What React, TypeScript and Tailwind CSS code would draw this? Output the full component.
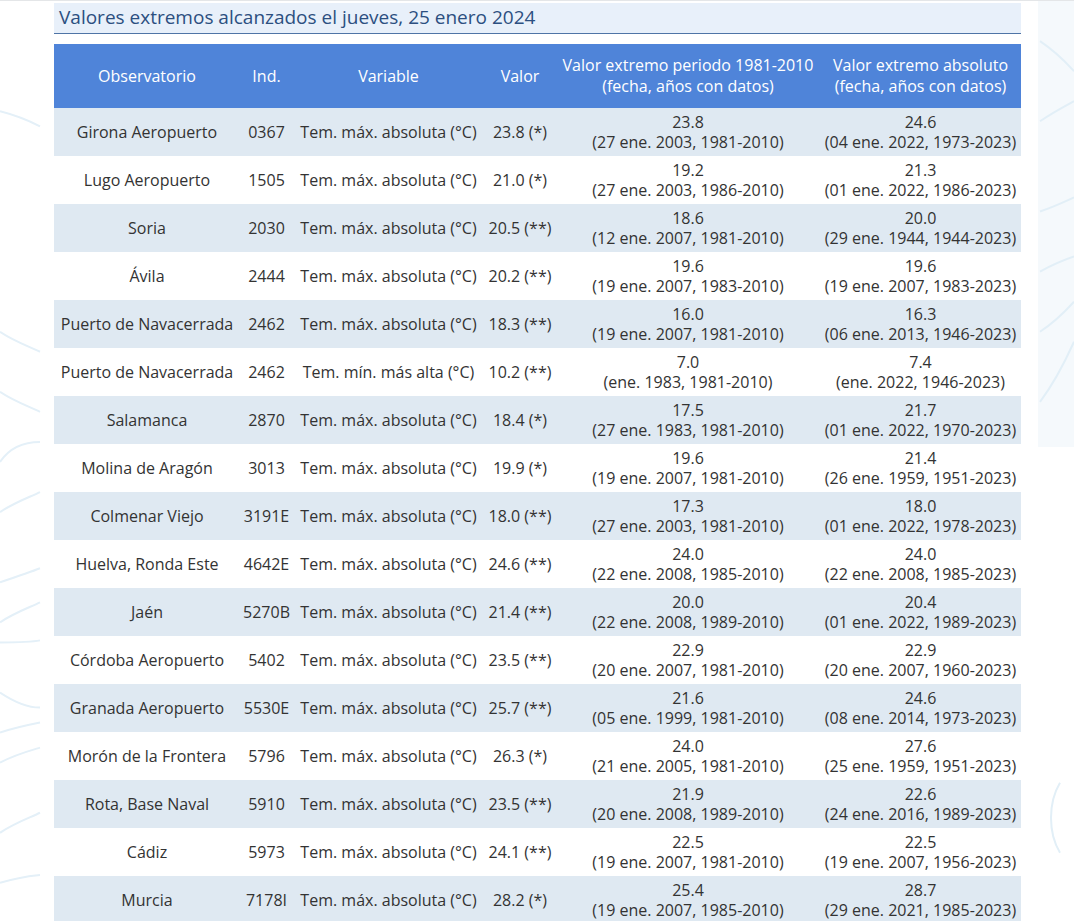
import React from "react";

interface Row {
  obs: string;
  ind: string;
  variable: string;
  valor: string;
  periodo: [string, string];
  absoluto: [string, string];
}

const MAX = "Tem. máx. absoluta (°C)";

const rows: Row[] = [
  { obs: "Girona Aeropuerto", ind: "0367", variable: MAX, valor: "23.8 (*)", periodo: ["23.8", "(27 ene. 2003, 1981-2010)"], absoluto: ["24.6", "(04 ene. 2022, 1973-2023)"] },
  { obs: "Lugo Aeropuerto", ind: "1505", variable: MAX, valor: "21.0 (*)", periodo: ["19.2", "(27 ene. 2003, 1986-2010)"], absoluto: ["21.3", "(01 ene. 2022, 1986-2023)"] },
  { obs: "Soria", ind: "2030", variable: MAX, valor: "20.5 (**)", periodo: ["18.6", "(12 ene. 2007, 1981-2010)"], absoluto: ["20.0", "(29 ene. 1944, 1944-2023)"] },
  { obs: "Ávila", ind: "2444", variable: MAX, valor: "20.2 (**)", periodo: ["19.6", "(19 ene. 2007, 1983-2010)"], absoluto: ["19.6", "(19 ene. 2007, 1983-2023)"] },
  { obs: "Puerto de Navacerrada", ind: "2462", variable: MAX, valor: "18.3 (**)", periodo: ["16.0", "(19 ene. 2007, 1981-2010)"], absoluto: ["16.3", "(06 ene. 2013, 1946-2023)"] },
  { obs: "Puerto de Navacerrada", ind: "2462", variable: "Tem. mín. más alta (°C)", valor: "10.2 (**)", periodo: ["7.0", "(ene. 1983, 1981-2010)"], absoluto: ["7.4", "(ene. 2022, 1946-2023)"] },
  { obs: "Salamanca", ind: "2870", variable: MAX, valor: "18.4 (*)", periodo: ["17.5", "(27 ene. 1983, 1981-2010)"], absoluto: ["21.7", "(01 ene. 2022, 1970-2023)"] },
  { obs: "Molina de Aragón", ind: "3013", variable: MAX, valor: "19.9 (*)", periodo: ["19.6", "(19 ene. 2007, 1981-2010)"], absoluto: ["21.4", "(26 ene. 1959, 1951-2023)"] },
  { obs: "Colmenar Viejo", ind: "3191E", variable: MAX, valor: "18.0 (**)", periodo: ["17.3", "(27 ene. 2003, 1981-2010)"], absoluto: ["18.0", "(01 ene. 2022, 1978-2023)"] },
  { obs: "Huelva, Ronda Este", ind: "4642E", variable: MAX, valor: "24.6 (**)", periodo: ["24.0", "(22 ene. 2008, 1985-2010)"], absoluto: ["24.0", "(22 ene. 2008, 1985-2023)"] },
  { obs: "Jaén", ind: "5270B", variable: MAX, valor: "21.4 (**)", periodo: ["20.0", "(22 ene. 2008, 1989-2010)"], absoluto: ["20.4", "(01 ene. 2022, 1989-2023)"] },
  { obs: "Córdoba Aeropuerto", ind: "5402", variable: MAX, valor: "23.5 (**)", periodo: ["22.9", "(20 ene. 2007, 1981-2010)"], absoluto: ["22.9", "(20 ene. 2007, 1960-2023)"] },
  { obs: "Granada Aeropuerto", ind: "5530E", variable: MAX, valor: "25.7 (**)", periodo: ["21.6", "(05 ene. 1999, 1981-2010)"], absoluto: ["24.6", "(08 ene. 2014, 1973-2023)"] },
  { obs: "Morón de la Frontera", ind: "5796", variable: MAX, valor: "26.3 (*)", periodo: ["24.0", "(21 ene. 2005, 1981-2010)"], absoluto: ["27.6", "(25 ene. 1959, 1951-2023)"] },
  { obs: "Rota, Base Naval", ind: "5910", variable: MAX, valor: "23.5 (**)", periodo: ["21.9", "(20 ene. 2008, 1989-2010)"], absoluto: ["22.6", "(24 ene. 2016, 1989-2023)"] },
  { obs: "Cádiz", ind: "5973", variable: MAX, valor: "24.1 (**)", periodo: ["22.5", "(19 ene. 2007, 1981-2010)"], absoluto: ["22.5", "(19 ene. 2007, 1956-2023)"] },
  { obs: "Murcia", ind: "7178I", variable: MAX, valor: "28.2 (*)", periodo: ["25.4", "(19 ene. 2007, 1985-2010)"], absoluto: ["28.7", "(29 ene. 2021, 1985-2023)"] },
];

// faint background swooshes, purely decorative
const Backdrop = () => (
  <svg className="absolute inset-0 w-full h-full pointer-events-none" viewBox="0 0 1074 921" preserveAspectRatio="none">
    <g fill="none" stroke="#e4f0f8" strokeWidth="2">
      <path d="M0 110 C 20 115, 30 120, 40 125" />
      <path d="M0 330 C 15 340, 30 345, 40 350" />
      <path d="M0 390 C 15 400, 30 405, 40 410" />
      <path d="M0 460 C 10 445, 25 440, 40 440" />
      <path d="M0 510 C 15 500, 30 495, 40 490" />
      <path d="M0 580 C 15 575, 30 570, 40 566" />
      <path d="M0 620 C 15 610, 30 605, 40 600" />
      <path d="M0 640 C 15 640, 30 640, 40 638" />
      <path d="M0 730 C 15 725, 30 722, 40 720" />
      <path d="M0 760 C 15 752, 30 748, 40 745" />
      <path d="M0 830 C 15 820, 30 815, 40 810" />
      <path d="M0 880 C 15 875, 30 873, 40 872" />
      <path d="M0 690 C 15 700, 30 705, 40 705" />
    </g>
    <rect x="1038" y="0" width="36" height="445" fill="#f5f9fc" />
    <g fill="none" stroke="#e2eff7" strokeWidth="2">
      <path d="M1040 40 C 1055 50, 1065 60, 1074 70" />
      <path d="M1040 120 C 1055 110, 1065 105, 1074 100" />
      <path d="M1040 210 C 1055 205, 1065 200, 1074 196" />
      <path d="M1040 330 C 1055 320, 1065 310, 1074 300" />
      <path d="M1040 400 C 1055 380, 1065 360, 1074 340" />
      <path d="M1040 270 C 1055 262, 1065 258, 1074 255" />
      <path d="M1060 780 C 1048 800, 1048 830, 1060 850" />
    </g>
  </svg>
);

const Stack = ({ lines }: { lines: [string, string] }) => (
  <div className="leading-[20px]">
    <div>{lines[0]}</div>
    <div>{lines[1]}</div>
  </div>
);

export default function App() {
  return (
    <div
      className="relative min-h-[921px] w-[1074px] overflow-hidden bg-white border-t border-[#e4e6e8]"
      style={{ fontFamily: '"Open Sans", "Noto Sans", sans-serif' }}
    >
      <Backdrop />
      <div className="relative ml-[54px] w-[967px] pt-[2px]">
        <h2 className="h-[31px] bg-[#e8f0fa] border-b border-[#4f74a6] pl-[5px] text-[19px] leading-[29px] text-[#2c4f80]">
          Valores extremos alcanzados el jueves, 25 enero 2024
        </h2>

        <table className="mt-[10px] w-[967px] table-fixed border-collapse text-[16px] text-[#333]">
          <colgroup>
            <col className="w-[186px]" />
            <col className="w-[53px]" />
            <col className="w-[191px]" />
            <col className="w-[72px]" />
            <col className="w-[264px]" />
            <col className="w-[201px]" />
          </colgroup>
          <thead>
            <tr className="h-16 bg-[#4f84d9] text-white">
              <th className="font-normal">Observatorio</th>
              <th className="font-normal">Ind.</th>
              <th className="font-normal">Variable</th>
              <th className="font-normal">Valor</th>
              <th className="font-normal leading-[21px]">
                Valor extremo periodo 1981-2010
                <br />
                (fecha, años con datos)
              </th>
              <th className="font-normal leading-[21px]">
                Valor extremo absoluto
                <br />
                (fecha, años con datos)
              </th>
            </tr>
          </thead>
          <tbody>
            {rows.map((r, i) => (
              <tr key={i} className={i % 2 === 0 ? "h-12 bg-[#dfe9f2] text-center" : "h-12 bg-white text-center"}>
                <td className="whitespace-nowrap">{r.obs}</td>
                <td>{r.ind}</td>
                <td className="whitespace-nowrap">{r.variable}</td>
                <td className="whitespace-nowrap">{r.valor}</td>
                <td>
                  <Stack lines={r.periodo} />
                </td>
                <td>
                  <Stack lines={r.absoluto} />
                </td>
              </tr>
            ))}
          </tbody>
        </table>
      </div>
    </div>
  );
}
